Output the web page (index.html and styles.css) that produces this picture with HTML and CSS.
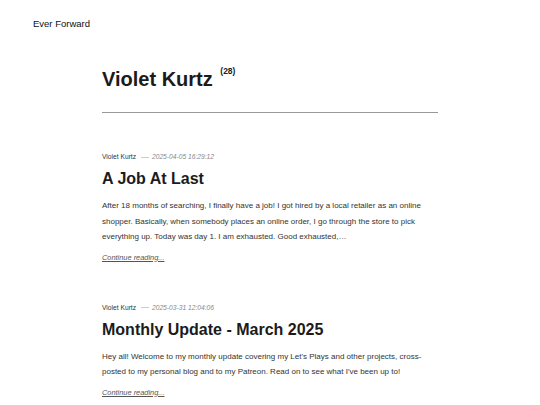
FILE: index.html
```html
<!DOCTYPE html>
<html lang="en">
<head>
    <meta charset="UTF-8">
    <meta name="viewport" content="width=device-width, initial-scale=1.0">
    <title>Violet Kurtz - Ever Forward</title>
    <link rel="stylesheet" href="styles.css">
</head>
<body>
    <div class="site-header">
        <a href="#" class="site-title">Ever Forward</a>
    </div>

    <div class="container">
        <div class="author-header">
            <h1>Violet Kurtz <sup>(28)</sup></h1>
        </div>

        <div class="post">
            <div class="post-meta">
                <span class="author">Violet Kurtz</span>
                <span class="date">2025-04-05 16:29:12</span>
            </div>
            <h2><a href="#">A Job At Last</a></h2>
            <p>After 18 months of searching, I finally have a job! I got hired by a local retailer as an online shopper. Basically, when somebody places an online order, I go through the store to pick everything up. Today was day 1. I am exhausted. Good exhausted,&hellip;</p>
            <a href="#" class="more">Continue reading...</a>
        </div>

        <div class="post">
            <div class="post-meta">
                <span class="author">Violet Kurtz</span>
                <span class="date">2025-03-31 12:04:06</span>
            </div>
            <h2><a href="#">Monthly Update - March 2025</a></h2>
            <p>Hey all! Welcome to my monthly update covering my Let's Plays and other projects, cross-posted to my personal blog and to my Patreon. Read on to see what I've been up to!</p>
            <a href="#" class="more">Continue reading...</a>
        </div>
    </div>
</body>
</html>
```

FILE: styles.css
```css
body { font-family: "Liberation Sans", Arial, sans-serif; margin: 0; color: #222; background: #fff; }
a { color: inherit; text-decoration: none; }
.site-header { padding: 13px 33px 0; height: 30px; }
.site-title { font-size: 9.5px; color: #111; }
.container { width: 336px; margin: 0 auto; }
.author-header { margin-top: 14px; padding-bottom: 19px; border-bottom: 1px solid #999; }
.author-header h1 { margin: 0; font-size: 20px; line-height: 28px; font-weight: bold; color: #1b1b1b; }
.author-header sup { font-size: 8.5px; vertical-align: 12px; margin-left: 2px; }
.post { margin-top: 40px; }
.post + .post { margin-top: 42px; }
.post-meta { font-size: 6.7px; line-height: 8px; color: #333; }
.post-meta .date { color: #888; font-style: italic; margin-left: 3px; }
.post-meta .date::before { content: ""; display: inline-block; width: 8px; height: 1px; background: #ccc; vertical-align: middle; margin-right: 3px; }
.post h2 { margin: 7px 0 0; font-size: 16px; line-height: 22px; color: #1b1b1b; }
.post p { margin: 8px 0 0; font-size: 8px; line-height: 15.5px; color: #333; }
.more { display: block; width: fit-content; margin-top: 8px; font-size: 7.4px; line-height: 9px; font-style: italic; text-decoration: underline; color: #555; }
```
